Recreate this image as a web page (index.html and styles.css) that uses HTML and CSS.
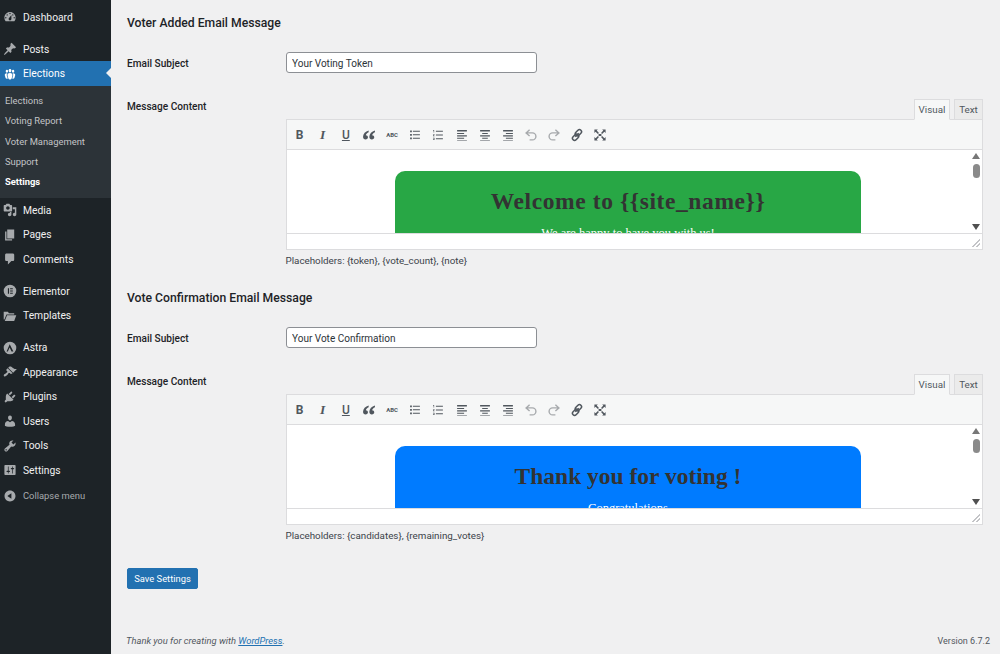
FILE: index.html
```html
<!DOCTYPE html>
<html lang="en">
<head>
<meta charset="utf-8">
<title>Election Settings</title>
<link rel="stylesheet" href="styles.css">
</head>
<body>
<svg class="sprite" width="0" height="0" aria-hidden="true">
<defs>
<symbol id="i-dashboard" viewBox="0 0 20 20"><path fill-rule="evenodd" d="M3.76 16h12.48c1.1-1.37 1.76-3.11 1.76-5 0-4.42-3.58-8-8-8s-8 3.58-8 8c0 1.89.66 3.63 1.76 5zM10 4c.55 0 1 .45 1 1s-.45 1-1 1-1-.45-1-1 .45-1 1-1zM6 6c.55 0 1 .45 1 1s-.45 1-1 1-1-.45-1-1 .45-1 1-1zm8 0c.55 0 1 .45 1 1s-.45 1-1 1-1-.45-1-1 .45-1 1-1zm-5.37 5.55L12 7v6c0 1.1-.9 2-2 2s-2-.9-2-2c0-.57.24-1.08.63-1.45zM4 10c.55 0 1 .45 1 1s-.45 1-1 1-1-.45-1-1 .45-1 1-1zm12 0c.55 0 1 .45 1 1s-.45 1-1 1-1-.45-1-1 .45-1 1-1z"/></symbol>
<symbol id="i-post" viewBox="0 0 20 20"><path d="M10.44 3.02l1.82-1.82 6.36 6.35-1.83 1.82c-1.05-.68-2.48-.57-3.41.36l-.75.75c-.92.93-1.04 2.35-.35 3.41l-1.83 1.82-2.41-2.41-2.8 2.79c-.42.42-3.38 2.71-3.8 2.29s1.86-3.39 2.28-3.81l2.79-2.79L4.1 9.36l1.83-1.82c1.05.69 2.48.57 3.4-.36l.75-.75c.93-.92 1.05-2.35.36-3.41z"/></symbol>
<symbol id="i-groups" viewBox="0 0 20 20"><path d="M8.03 4.46c-.29 1.28.55 3.46 1.97 3.46 1.41 0 2.25-2.18 1.96-3.46-.22-.98-1.08-1.63-1.96-1.63-.89 0-1.74.65-1.97 1.63zm-4.13.9c-.25 1.08.47 2.93 1.67 2.93s1.92-1.85 1.67-2.93c-.19-.83-.92-1.39-1.67-1.39s-1.48.56-1.67 1.39zm8.86 0c-.25 1.08.47 2.93 1.66 2.93 1.2 0 1.92-1.85 1.67-2.93-.19-.83-.92-1.39-1.67-1.39-.74 0-1.47.56-1.66 1.39zm-.59 11.43l1.25-4.3C14.2 10 12.71 8.47 10 8.47c-2.72 0-4.21 1.53-3.44 4.02l1.26 4.3C8.05 17.51 9 18 10 18c.98 0 1.94-.49 2.17-1.21zm-6.1-7.63c-.49.67-.96 1.83-.42 3.59l1.12 3.79c-.34.2-.77.31-1.2.31-.85 0-1.65-.41-1.85-1.03l-1.07-3.65c-.65-2.11.61-3.4 2.92-3.4.27 0 .54.02.79.06-.1.1-.2.22-.29.33zm8.35-.39c2.31 0 3.58 1.29 2.92 3.4l-1.07 3.65c-.2.62-1 1.03-1.85 1.03-.43 0-.86-.11-1.2-.31l1.11-3.77c.55-1.78.08-2.94-.42-3.61-.08-.11-.18-.23-.28-.33.25-.04.51-.06.79-.06z"/></symbol>
<symbol id="i-media" viewBox="0 0 20 20"><path fill-rule="evenodd" d="M13 11V4c0-.55-.45-1-1-1h-1.67L9 1H5L3.67 3H2c-.55 0-1 .45-1 1v7c0 .55.45 1 1 1h10c.55 0 1-.45 1-1zM7 4.5c1.38 0 2.5 1.12 2.5 2.5S8.38 9.5 7 9.5 4.5 8.38 4.5 7 5.62 4.5 7 4.5zM14 6h5v10.5c0 1.38-1.12 2.5-2.5 2.5S14 17.88 14 16.5s1.12-2.5 2.5-2.5c.17 0 .34.02.5.05V9h-3V6zm-4 8.05V13h2v3.5c0 1.38-1.12 2.5-2.5 2.5S7 17.88 7 16.5 8.12 14 9.5 14c.17 0 .34.02.5.05z"/></symbol>
<symbol id="i-pages" viewBox="0 0 20 20"><path d="M6 15V2h10v13H6zm-1 1h8v2H3V5h2v11z"/></symbol>
<symbol id="i-comments" viewBox="0 0 20 20"><path d="M5 2h9c1.1 0 2 .9 2 2v7c0 1.1-.9 2-2 2h-2l-5 5v-5H5c-1.1 0-2-.9-2-2V4c0-1.1.9-2 2-2z"/></symbol>
<symbol id="i-elementor" viewBox="0 0 20 20"><path fill-rule="evenodd" d="M10 1a9 9 0 1 0 0 18 9 9 0 0 0 0-18zM7 6h1.6v8H7V6zm3.2 0H14v1.6h-3.8V6zm0 3.2H14v1.6h-3.8V9.200zm0 3.200H14V14h-3.800v-1.600z"/></symbol>
<symbol id="i-folder" viewBox="0 0 20 20"><path d="M1 4h6l1.500 2H16v2H5L2 15H1V4zm4.800 5H19l-3 8H2.500l3.300-8z"/></symbol>
<symbol id="i-astra" viewBox="0 0 20 20"><path fill-rule="evenodd" d="M10 1a9 9 0 1 0 0 18 9 9 0 0 0 0-18zM9.600 4.500l5.200 10.500h-2.600L9.500 9.200 6.900 15H5.100L9.600 4.500z"/></symbol>
<symbol id="i-brush" viewBox="0 0 20 20"><path d="M14.480 11.060L7.410 3.990l1.500-1.500c.5-.56 2.300-.47 3.510.32 1.210.8 1.430 1.280 2.910 2.100 1.180.64 2.450 1.260 4.450.85zm-.71.71L6.700 4.700 4.930 6.470c-.39.39-.39 1.020 0 1.410l1.060 1.060c.39.39.39 1.030 0 1.420-.6.6-1.430 1.110-2.210 1.690-.35.26-.7.53-1.010.84C1.430 13.230.4 14.850 1.560 16c1.150 1.150 2.760.12 4.090-1.220.31-.31.58-.66.84-1.010.58-.78 1.090-1.610 1.690-2.210.39-.39 1.020-.39 1.410 0l1.060 1.060c.39.39 1.030.39 1.420 0z"/></symbol>
<symbol id="i-plugin" viewBox="0 0 20 20"><path d="M13.110 4.360L9.870 7.600 8 5.730l3.240-3.240c.35-.34 1.050-.2 1.560.32.52.51.66 1.210.31 1.550zm-8 1.770l.91-1.120 9.010 9.010-1.190.84c-.71.71-2.630 1.160-3.820 1.160H6.140L4.900 17.260c-.59.59-1.540.59-2.120 0-.59-.58-.59-1.530 0-2.120l1.240-1.240v-3.880c0-1.130.4-3.190 1.090-3.890zm7.260 3.970l3.240-3.240c.34-.35 1.040-.21 1.550.31.52.51.66 1.210.31 1.550l-3.240 3.250z"/></symbol>
<symbol id="i-users" viewBox="0 0 20 20"><path d="M10 9.250c-2.270 0-2.730-3.440-2.730-3.440C7 4.020 7.820 2 9.970 2c2.160 0 2.980 2.020 2.710 3.810 0 0-.41 3.440-2.680 3.440zm0 2.570L12.720 10c2.390 0 4.520 2.330 4.520 4.530v2.490s-3.650 1.130-7.240 1.130c-3.650 0-7.240-1.130-7.240-1.130v-2.490c0-2.250 1.940-4.480 4.470-4.480z"/></symbol>
<symbol id="i-tools" viewBox="0 0 20 20"><path fill-rule="evenodd" d="M16.680 9.770c-1.340 1.340-3.300 1.670-4.950.99l-5.410 6.520c-.99.99-2.590.99-3.580 0s-.99-2.590 0-3.570l6.520-5.420c-.68-1.650-.35-3.610.99-4.950 1.280-1.280 3.120-1.620 4.720-1.060l-2.890 2.890 2.820 2.820 2.860-2.870c.53 1.580.18 3.390-1.080 4.650zM3.810 16.210c.4.39 1.040.39 1.430 0 .4-.4.4-1.040 0-1.430-.39-.4-1.030-.4-1.430 0-.39.39-.39 1.030 0 1.430z"/></symbol>
<symbol id="i-settings" viewBox="0 0 20 20"><path fill-rule="evenodd" d="M18 16V4c0-.55-.45-1-1-1H3c-.55 0-1 .45-1 1v12c0 .55.45 1 1 1h14c.55 0 1-.45 1-1zM8 11h1c.55 0 1 .45 1 1s-.45 1-1 1H8v1.500c0 .28-.22.5-.5.5s-.5-.22-.5-.5V13H6c-.55 0-1-.45-1-1s.45-1 1-1h1V5.500c0-.28.22-.5.5-.5s.5.22.5.5V11zm5-2h-1c-.55 0-1-.45-1-1s.45-1 1-1h1V5.500c0-.28.22-.5.5-.5s.5.22.5.5V7h1c.55 0 1 .45 1 1s-.45 1-1 1h-1v5.500c0 .28-.22.5-.5.5s-.5-.22-.5-.5V9z"/></symbol>
<symbol id="i-collapse" viewBox="0 0 20 20"><path fill-rule="evenodd" d="M10 2.160c4.330 0 7.840 3.510 7.840 7.840s-3.510 7.840-7.840 7.840S2.160 14.330 2.160 10 5.710 2.160 10 2.160zm2 11.720V6.120L6.180 9.970z"/></symbol>
<symbol id="t-quote" viewBox="0 0 20 20"><path d="M9.500 3.500C5 5 1.500 8 1.500 12.500c0 2.500 1.500 4 3.600 4 1.900 0 3.400-1.400 3.400-3.200S7.200 10.200 5.500 10.200c.5-2 2-3.300 4-4.200zm9 0C14 5 10.500 8 10.500 12.500c0 2.500 1.500 4 3.600 4 1.900 0 3.400-1.400 3.400-3.200s-1.300-3.100-3-3.100c.5-2 2-3.300 4-4.200z"/></symbol>
<symbol id="t-ul" viewBox="0 0 20 20"><path d="M7 4h10v1.500H7zm0 5h10v1.500H7zm0 5h10v1.500H7zM3 3.500h2.500V6H3zm0 5h2.500V11H3zm0 5h2.500V16H3z"/></symbol>
<symbol id="t-ol" viewBox="0 0 20 20"><path d="M7 4h10v1.200H7zm0 5.400h10v1.200H7zM7 14.800h10V16H7zM3 3h1.500v3.500H3.700V4H3zm-.2 6h2.200v.9l-1.200 1.200H5v.8H2.800v-.8L4 9.800H2.800zm0 5H5v3.200H2.800v-.7h1.400V16H3v-.6h1.200v-.7H2.800z"/></symbol>
<symbol id="t-left" viewBox="0 0 20 20"><path d="M3 3h14v2H3zm0 4h10v1.500H3zm0 3.500h14V12H3zm0 3.500h10v1.500H3zm0 3h14v1H3z"/></symbol>
<symbol id="t-center" viewBox="0 0 20 20"><path d="M3 3h14v2H3zm3 4h8v1.500H6zm-3 3.500h14V12H3zm3 3.500h8v1.500H6zm-3 3h14v1H3z"/></symbol>
<symbol id="t-right" viewBox="0 0 20 20"><path d="M3 3h14v2H3zm4 4h10v1.500H7zm-4 3.500h14V12H3zm4 3.500h10v1.500H7zm-4 3h14v1H3z"/></symbol>
<symbol id="t-undo" viewBox="0 0 20 20"><path fill="none" stroke="#a7aaad" stroke-width="2" d="M8 2.500 3 7l5 4.500M3.500 7H12a4.800 4.800 0 0 1 0 10H8"/></symbol>
<symbol id="t-redo" viewBox="0 0 20 20"><path fill="none" stroke="#a7aaad" stroke-width="2" d="M12 2.500 17 7l-5 4.500M16.500 7H8a4.800 4.800 0 0 0 0 10h4"/></symbol>
<symbol id="t-link" viewBox="0 0 20 20"><g fill="none" stroke="#50575e" stroke-width="2.200"><rect x="1.500" y="7" width="10" height="6" rx="3" transform="rotate(-45 6.500 10) translate(-1.200 3.300)"/><rect x="8.500" y="7" width="10" height="6" rx="3" transform="rotate(-45 13.500 10) translate(1.200 -3.300)"/></g><path d="m6.800 11.800 5-5 1.400 1.400-5 5z" fill="#50575e"/></symbol>
<symbol id="t-full" viewBox="0 0 20 20"><path d="M2 2h5L5.300 3.700 8.500 7l-1.500 1.500L3.700 5.300 2 7zm16 0v5l-1.700-1.700L13 8.500 11.500 7l3.200-3.300L13 2zM2 18v-5l1.700 1.700L7 11.500 8.500 13l-3.200 3.300L7 18zm16 0h-5l1.700-1.700L11.500 13l1.500-1.500 3.300 3.200L18 13zM8 8.500h4v3H8z"/></symbol>
</defs>
</svg>
<div class="layout">
<nav class="sidebar">
  <ul class="menu">
    <li class="item"><svg class="ico"><use href="#i-dashboard"/></svg><span>Dashboard</span></li>
    <li class="sep"></li>
    <li class="item"><svg class="ico"><use href="#i-post"/></svg><span>Posts</span></li>
    <li class="item current"><svg class="ico"><use href="#i-groups"/></svg><span>Elections</span></li>
    <li>
      <ul class="submenu">
        <li>Elections</li>
        <li>Voting Report</li>
        <li>Voter Management</li>
        <li>Support</li>
        <li class="active">Settings</li>
      </ul>
    </li>
    <li class="item"><svg class="ico"><use href="#i-media"/></svg><span>Media</span></li>
    <li class="item"><svg class="ico"><use href="#i-pages"/></svg><span>Pages</span></li>
    <li class="item"><svg class="ico"><use href="#i-comments"/></svg><span>Comments</span></li>
    <li class="sep"></li>
    <li class="item"><svg class="ico"><use href="#i-elementor"/></svg><span>Elementor</span></li>
    <li class="item"><svg class="ico"><use href="#i-folder"/></svg><span>Templates</span></li>
    <li class="sep"></li>
    <li class="item"><svg class="ico"><use href="#i-astra"/></svg><span>Astra</span></li>
    <li class="item"><svg class="ico"><use href="#i-brush"/></svg><span>Appearance</span></li>
    <li class="item"><svg class="ico"><use href="#i-plugin"/></svg><span>Plugins</span></li>
    <li class="item"><svg class="ico"><use href="#i-users"/></svg><span>Users</span></li>
    <li class="item"><svg class="ico"><use href="#i-tools"/></svg><span>Tools</span></li>
    <li class="item"><svg class="ico"><use href="#i-settings"/></svg><span>Settings</span></li>
    <li class="item collapse"><svg class="ico"><use href="#i-collapse"/></svg><span>Collapse menu</span></li>
  </ul>
</nav>
<main class="main">
  <section class="section">
    <h2 class="title">Voter Added Email Message</h2>
    <div class="row">
      <label class="label">Email Subject</label>
      <input class="text-input" type="text" value="Your Voting Token">
    </div>
    <div class="row row-editor">
      <label class="label label-editor">Message Content</label>
      <div class="field">
        <div class="tabs"><span class="tab tab-on">Visual</span><span class="tab">Text</span></div>
        <div class="editor">
          <div class="toolbar">
            <span class="tb tb-b">B</span><span class="tb tb-i">I</span><span class="tb tb-u">U</span>
            <span class="tb"><svg class="tbi"><use href="#t-quote"/></svg></span><span class="tb tb-abc">ABC</span>
            <span class="tb"><svg class="tbi"><use href="#t-ul"/></svg></span><span class="tb"><svg class="tbi"><use href="#t-ol"/></svg></span>
            <span class="tb"><svg class="tbi"><use href="#t-left"/></svg></span><span class="tb"><svg class="tbi"><use href="#t-center"/></svg></span><span class="tb"><svg class="tbi"><use href="#t-right"/></svg></span>
            <span class="tb"><svg class="tbi"><use href="#t-undo"/></svg></span><span class="tb"><svg class="tbi"><use href="#t-redo"/></svg></span>
            <span class="tb"><svg class="tbi"><use href="#t-link"/></svg></span><span class="tb"><svg class="tbi"><use href="#t-full"/></svg></span>
          </div>
          <div class="frame">
            <div class="mail mail-green">
              <h1 class="mail-title title-wide">Welcome to {{site_name}}</h1>
              <p class="mail-sub">We are happy to have you with us!</p>
            </div>
            <div class="scroll"><span class="arrow-up"></span><span class="thumb"></span><span class="arrow-down"></span></div>
          </div>
          <div class="status"><span class="grip"></span></div>
        </div>
        <p class="hint">Placeholders: {token}, {vote_count}, {note}</p>
      </div>
    </div>
  </section>
  <section class="section">
    <h2 class="title">Vote Confirmation Email Message</h2>
    <div class="row">
      <label class="label">Email Subject</label>
      <input class="text-input" type="text" value="Your Vote Confirmation">
    </div>
    <div class="row row-editor">
      <label class="label label-editor">Message Content</label>
      <div class="field">
        <div class="tabs"><span class="tab tab-on">Visual</span><span class="tab">Text</span></div>
        <div class="editor">
          <div class="toolbar">
            <span class="tb tb-b">B</span><span class="tb tb-i">I</span><span class="tb tb-u">U</span>
            <span class="tb"><svg class="tbi"><use href="#t-quote"/></svg></span><span class="tb tb-abc">ABC</span>
            <span class="tb"><svg class="tbi"><use href="#t-ul"/></svg></span><span class="tb"><svg class="tbi"><use href="#t-ol"/></svg></span>
            <span class="tb"><svg class="tbi"><use href="#t-left"/></svg></span><span class="tb"><svg class="tbi"><use href="#t-center"/></svg></span><span class="tb"><svg class="tbi"><use href="#t-right"/></svg></span>
            <span class="tb"><svg class="tbi"><use href="#t-undo"/></svg></span><span class="tb"><svg class="tbi"><use href="#t-redo"/></svg></span>
            <span class="tb"><svg class="tbi"><use href="#t-link"/></svg></span><span class="tb"><svg class="tbi"><use href="#t-full"/></svg></span>
          </div>
          <div class="frame">
            <div class="mail mail-blue">
              <h1 class="mail-title">Thank you for voting !</h1>
              <p class="mail-sub">Congratulations</p>
            </div>
            <div class="scroll"><span class="arrow-up"></span><span class="thumb"></span><span class="arrow-down"></span></div>
          </div>
          <div class="status"><span class="grip"></span></div>
        </div>
        <p class="hint">Placeholders: {candidates}, {remaining_votes}</p>
      </div>
    </div>
  </section>
  <button class="save" type="button">Save Settings</button>
  <footer class="footer">
    <span class="thanks">Thank you for creating with <a href="#">WordPress</a>.</span>
    <span class="version">Version 6.7.2</span>
  </footer>
</main>
</div>
</body>
</html>
```
FILE: styles.css
```css
* { box-sizing: border-box; }
html, body { margin: 0; height: 100%; overflow: hidden; }
body { background: #f0f0f1; color: #3c434a; font-family: Roboto, "Open Sans", sans-serif; font-size: 10.3px; }
.sprite { position: absolute; }
.layout { display: flex; height: 654px; }

.sidebar { width: 111px; flex: none; background: #1d2327; padding-top: 4.75px; }
.menu, .submenu { list-style: none; margin: 0; padding: 0; }
.item { position: relative; display: flex; align-items: center; height: 24.5px; color: #f0f0f1; font-size: 10.3px; }
.item span { margin-left: 3.5px; }
.ico { width: 14px; height: 14px; margin-left: 3px; fill: #a7aaad; flex: none; margin-right: 2.5px; }
.sep { height: 7.5px; }
.current { background: #2271b1; color: #fff; }
.current .ico { fill: #fff; }
.current::after { content: ""; position: absolute; right: 0; top: 7px; border: 5px solid transparent; border-left: 0; border-right-color: #f0f0f1; }
.submenu { background: #2c3338; padding: 5.25px 0 5.5px; color: #c3c4c7; font-size: 9.4px; }
.submenu li { height: 20.3px; line-height: 20.3px; padding-left: 5px; }
.submenu .active { color: #fff; font-weight: 700; }
.collapse { margin-top: 1px; color: #a7aaad; font-size: 9.4px; }

.main { flex: 1; display: flex; flex-direction: column; align-items: flex-start; padding: 15px 10px 6px 16px; min-width: 0; }
.section { width: 100%; padding-right: 7px; margin-bottom: 23px; }
.section + .section { margin-bottom: 26px; }
.title { margin: 0 0 21px; font-size: 12.2px; line-height: 16px; font-weight: 500; color: #1d2327; }
.row { display: flex; align-items: center; }
.row-editor { align-items: flex-start; margin-top: 26px; }
.label { width: 158.5px; flex: none; padding-top: 1px; color: #1d2327; font-size: 10.1px; font-weight: 500; }
.label-editor { line-height: 14px; }
.text-input { width: 251px; height: 21px; margin-left: 0.5px; padding: 1px 5px 0; border: 1px solid #8c8f94; border-radius: 3px; background: #fff; color: #2c3338; font: inherit; font-size: 10px; outline: none; }
.field { flex: 1; min-width: 0; }
.tabs { display: flex; justify-content: flex-end; gap: 4px; height: 21px; margin-bottom: -1px; position: relative; }
.tab { width: 29px; text-align: center; height: 21px; line-height: 20px; border: 1px solid #dcdcde; background: #ebebeb; color: #50575e; font-size: 9.8px; }
.tab-on { width: 36px; background: #f6f7f7; border-bottom-color: #f6f7f7; }
.editor { border: 1px solid #dcdcde; background: #fff; }
.toolbar { display: flex; align-items: center; height: 30px; padding-left: 1.5px; background: #f6f7f7; border-bottom: 1px solid #dcdcde; }
.tb { display: flex; align-items: center; justify-content: center; flex: none; width: 23.15px; height: 20px; color: #50575e; font-size: 11px; }
.tb-b { font-weight: 700; font-size: 12px; }
.tb-i { font-family: "Liberation Serif", serif; font-style: italic; font-weight: 700; font-size: 13.5px; }
.tb-u { text-decoration: underline; font-size: 12px; font-weight: 500; }
.tb-abc { font-size: 6px; font-weight: 700; }
.tbi { width: 14px; height: 14px; fill: #50575e; }
.frame { position: relative; height: 83px; overflow: hidden; padding: 21px 7px 0 0; }
.mail { width: 466px; height: 160px; margin-left: 108.5px; border-radius: 10px; text-align: center; padding-top: 15.5px; }
.mail-green { background: #28a745; }
.mail-blue { background: #007bff; }
.mail-title { margin: 0; font-family: "Liberation Serif", serif; font-weight: 700; font-size: 23.5px; line-height: 28px; color: #333; }
.title-wide { letter-spacing: 0.6px; }
.mail-sub { margin: 11.5px 0 0; font-family: "Liberation Serif", serif; font-weight: 400; font-size: 12.5px; line-height: 14px; color: #fff; }
.scroll { position: absolute; top: 0; right: 0; bottom: 0; width: 14px; background: #fff; }
.arrow-up, .arrow-down, .thumb { position: absolute; }
.arrow-up { top: 3px; left: 4px; border: 4px solid transparent; border-top: 0; border-bottom: 6px solid #777; }
.arrow-down { bottom: 3px; left: 4px; border: 4px solid transparent; border-bottom: 0; border-top: 6px solid #505050; }
.thumb { top: 14px; left: 4.5px; width: 7px; height: 14px; border-radius: 3.5px; background: #8a8a8a; }
.status { position: relative; height: 16px; background: #fff; border-top: 1px solid #dcdcde; }
.grip { position: absolute; right: 2px; bottom: 2px; width: 8px; height: 8px; background: linear-gradient(135deg, transparent 50%, #c3c4c7 50%, #c3c4c7 60%, transparent 60%, transparent 72%, #c3c4c7 72%, #c3c4c7 82%, transparent 82%); }
.hint { margin: 4px 0 -1px; font-size: 9.8px; line-height: 14px; color: #3c434a; }

.save { height: 21px; width: 71px; padding: 0; border: 1px solid #2271b1; border-radius: 2px; background: #2271b1; color: #fff; font: inherit; font-size: 9.4px; }
.footer { display: flex; justify-content: space-between; width: 100%; margin-top: auto; padding: 0; font-size: 9.4px; line-height: 14px; color: #50575e; }
.thanks { font-style: italic; margin-left: -1px; }
.thanks a { color: #2271b1; }
.version { font-size: 9px; }
```
